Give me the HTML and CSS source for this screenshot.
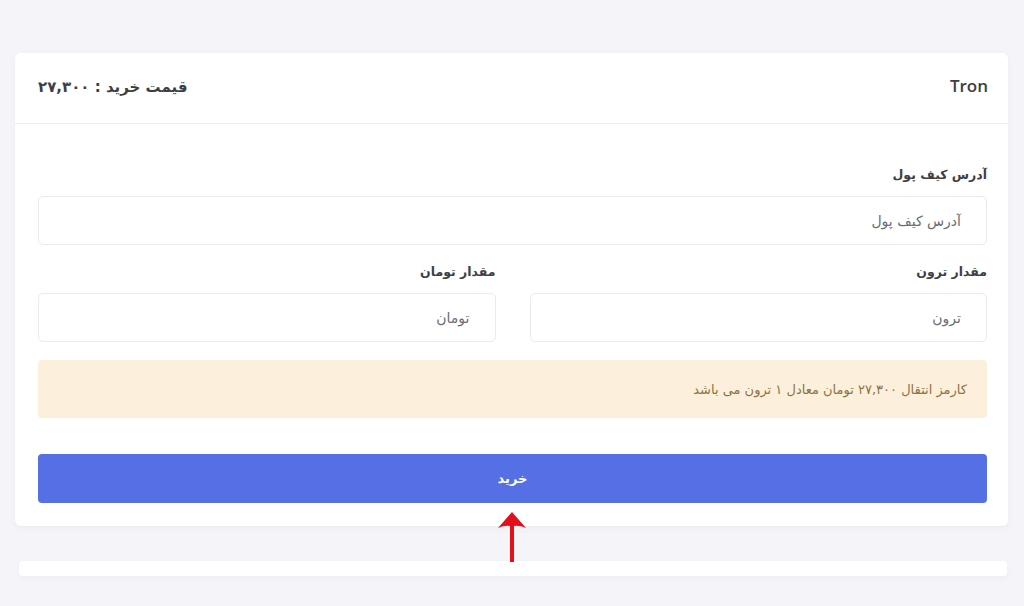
FILE: index.html
```html
<!DOCTYPE html>
<html lang="fa">
<head>
<meta charset="utf-8">
<title>Tron</title>
<link rel="stylesheet" href="styles.css">
</head>
<body>
<div class="page">
  <div class="card" dir="rtl">
    <div class="card-header">
      <div class="coin" dir="ltr">Tron</div>
      <div class="price">قیمت خرید : ۲۷,۳۰۰</div>
    </div>
    <div class="card-body">
      <div class="group">
        <label class="label">آدرس کیف پول</label>
        <div class="input">آدرس کیف پول</div>
      </div>
      <div class="row">
        <div class="col">
          <label class="label">مقدار ترون</label>
          <div class="input">ترون</div>
        </div>
        <div class="col">
          <label class="label">مقدار تومان</label>
          <div class="input">تومان</div>
        </div>
      </div>
      <div class="alert">کارمز انتقال ۲۷,۳۰۰ تومان معادل ۱ ترون می باشد</div>
      <div class="btn-wrap">
        <button class="btn">خرید</button>
        <div class="arrow">
          <svg width="30" height="52" viewBox="0 0 30 52">
            <path d="M15 1 L29 17 Q22 14 17 15 L17 51 L13 51 L13 15 Q8 14 1 17 Z" fill="#e3101a"/>
          </svg>
        </div>
      </div>
    </div>
  </div>
  <div class="card2"></div>
</div>
</body>
</html>
```

FILE: styles.css
```css
html, body {
  margin: 0;
  padding: 0;
}
body {
  background: #f5f5f9;
  font-family: "DejaVu Sans", "Noto Sans", sans-serif;
  color: #3a3b45;
  width: 1024px;
  height: 606px;
  overflow: hidden;
}
.page {
  padding: 53px 16px 0 15px;
}
.card {
  background: #fff;
  border-radius: 6px;
  box-shadow: 0 2px 6px rgba(67, 89, 113, 0.06);
  height: 473px;
  box-sizing: border-box;
}
.card-header {
  height: 71px;
  box-sizing: border-box;
  border-bottom: 1px solid #eceef1;
  display: flex;
  align-items: center;
  justify-content: space-between;
  padding: 0 20px 5px 23px;
}
.coin {
  font-family: "Open Sans", sans-serif;
  font-size: 17px;
  font-weight: 600;
  color: #3d3e46;
}
.price {
  font-size: 15px;
  font-weight: bold;
  color: #3d3e46;
  padding-top: 2px;
}
.card-body {
  padding: 41px 21px 0 23px;
}
.label {
  display: block;
  font-size: 12.5px;
  font-weight: bold;
  line-height: 20px;
  color: #3d3e46;
  margin-bottom: 11px;
}
.input {
  height: 49px;
  box-sizing: border-box;
  border: 1px solid #e9ebf0;
  border-radius: 5px;
  padding: 0 25px;
  display: flex;
  align-items: center;
  font-size: 14px;
  color: #6b6c74;
}
.group {
  margin-bottom: 17px;
}
.row {
  display: flex;
  gap: 34px;
}
.col {
  flex: 1;
}
.alert {
  margin-top: 18px;
  height: 58px;
  box-sizing: border-box;
  background: #fcf0dc;
  border-radius: 4px;
  display: flex;
  align-items: center;
  padding: 0 20px;
  font-size: 13px;
  color: #8b7442;
}
.btn-wrap {
  position: relative;
  margin-top: 36px;
}
.btn {
  display: block;
  width: 100%;
  height: 49px;
  border: none;
  border-radius: 4px;
  background: #5570e4;
  color: #fff;
  font-family: "DejaVu Sans", sans-serif;
  font-size: 13px;
  font-weight: bold;
  cursor: pointer;
}
.arrow {
  position: absolute;
  left: 459px;
  top: 57px;
  line-height: 0;
}
.card2 {
  margin: 35px 1px 0 4px;
  height: 15px;
  background: #fff;
  border-radius: 4px;
  box-shadow: 0 2px 6px rgba(67, 89, 113, 0.05);
}
```
